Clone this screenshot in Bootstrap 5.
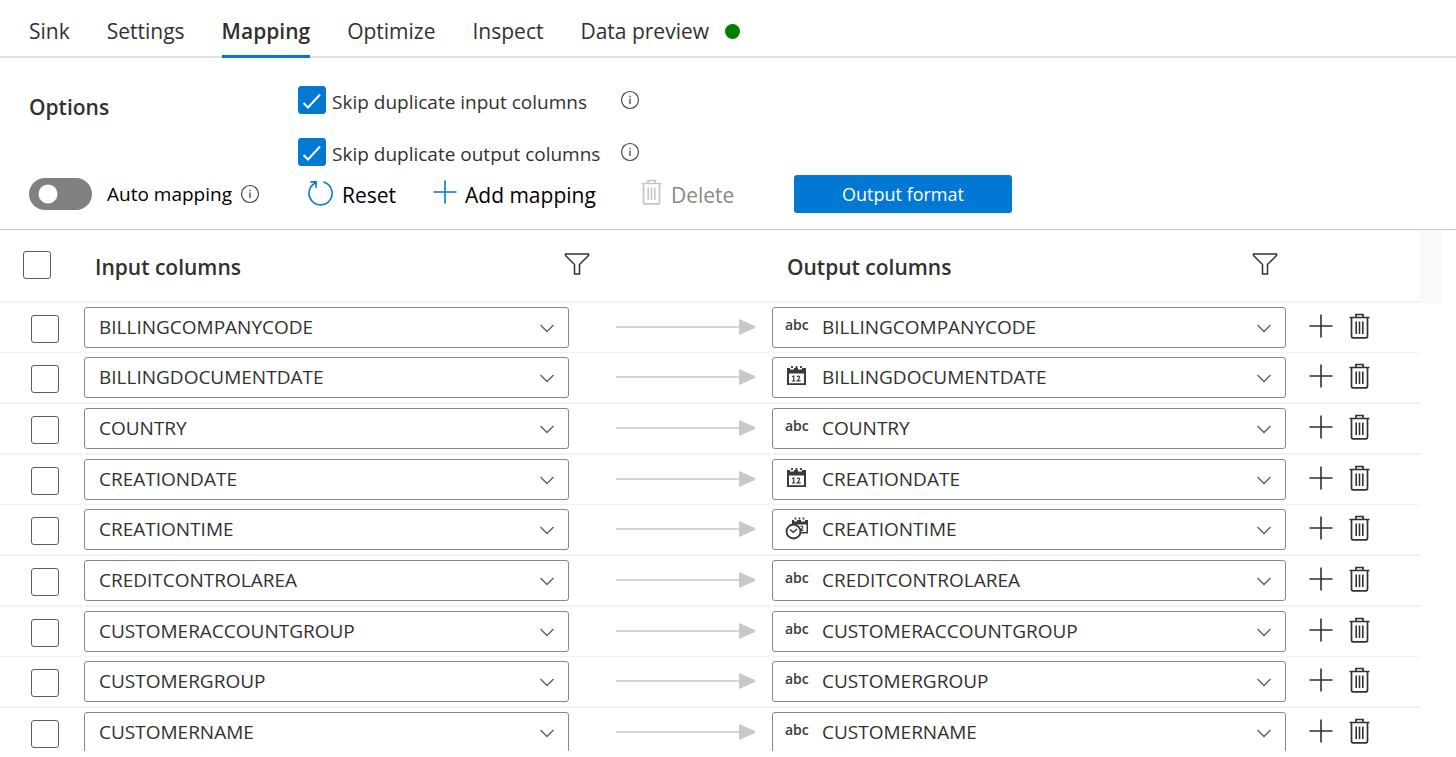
<!DOCTYPE html>
<html lang="en">
<head>
<meta charset="utf-8">
<meta name="viewport" content="width=device-width, initial-scale=1">
<title>Sink mapping</title>
<link href="https://cdn.jsdelivr.net/npm/bootstrap@5.3.0/dist/css/bootstrap.min.css" rel="stylesheet">
<style>
  body { font-family: "Open Sans", "Noto Sans", sans-serif; font-size: 19px; line-height: 26px; color: #323130; }
  .page { height: 100vh; padding-bottom: 6px; }
  svg { display: block; flex: none; fill: none; stroke: currentColor; }

  .tabs { height: 58px; gap: 37px; padding-left: 29px; border-bottom: 2px solid #e1e1e1; font-size: 21px; }
  .tabs .nav-link { padding: 17px 0 10px; line-height: 28px; height: 58px; color: #323130; border-bottom: 3px solid transparent; }
  .tabs .nav-link.active { font-weight: 600; border-bottom-color: #0078d4; }
  .status-dot { width: 15px; height: 15px; margin-left: 16px; background: #008000; }

  .options { display: grid; grid-template-columns: 269px 1fr; padding: 28px 29px 0; }
  .options h2 { font-size: 21px; line-height: 28px; font-weight: 600; margin: 7px 0 0; }
  .option-row { display: grid; grid-template-columns: 322px 1fr; height: 52px; align-items: start; }
  .option-row label { padding: 3px 0 0 6px; }
  .option-row .info { margin-top: 4px; }

  .box { flex: none; width: 28px; height: 28px; margin: 0; border: 1px solid #605e5c; }
  .box.form-check-input { border-radius: 3px; }
  .box.form-check-input:checked { background-color: #0078d4; border-color: #0078d4;
    background-size: 28px 28px;
    background-image: url("data:image/svg+xml,%3csvg xmlns='http://www.w3.org/2000/svg' viewBox='0 0 28 28'%3e%3cpath d='M5.500 17L10 21.500L22 8.500' fill='none' stroke='white' stroke-width='2'/%3e%3c/svg%3e"); }

  .tools { display: grid; grid-template-columns: 278px 126px 208px 153px 218px; padding: 0 29px 16px; height: 55px; align-items: start; margin-top: -15px; border-bottom: 1px solid #c8c8c8; color: #000; }
  .tools .btn { padding: 2px 0 0; border: 0; font-size: 21px; line-height: 28px; color: #000; height: 38px; }
  .tools .btn:disabled { color: #8a8886; opacity: 1; }
  .tools .btn:disabled svg { color: #c8c6c4; }
  .tools .btn svg { margin-bottom: 6px; }
  .tools .btn-primary { padding: 0; background: #0078d4; color: #fff; font-size: 18px; border-radius: 3px; }
  .tools label { margin-left: 15px; }
  .auto { height: 38px; }
  .toggle.form-check-input { width: 63px; height: 32px; margin: 0; border: 0; border-radius: 16px; background-color: #808080; background-size: 36px 36px; background-position: 1px center;
    background-image: url("data:image/svg+xml,%3csvg xmlns='http://www.w3.org/2000/svg' viewBox='0 0 36 36'%3e%3ccircle cx='18' cy='18' r='9.500' fill='white'/%3e%3c/svg%3e"); }
  .blue { color: #0078d4; }
  .info { color: #484644; }

  .list { min-height: 0; overflow: hidden; }
  .grid-table { flex: 1; table-layout: fixed; width: 100%; border-collapse: separate; border-spacing: 0; }
  .grid-table th, .grid-table td { padding: 0; vertical-align: top; }
  .grid-table thead th { height: 73px; border-bottom: 2px solid #f3f2f1; font-size: 21px; line-height: 28px; font-weight: 600; padding-top: 21px; }
  .grid-table tbody tr { height: 51px; }
  .grid-table tbody td { border-bottom: 2px solid #f3f2f1; padding-top: 4px; }
  .grid-table tbody tr:nth-child(3n+1) { height: 50px; }
  .grid-table tbody tr:nth-child(3n+1) td { border-bottom-width: 1px; }
  .c-check { width: 84px; }
  .c-arrow { width: 174px; }
  .c-act { width: 134px; }
  .grid-table .select-all { margin-left: 23px; }
  .grid-table tbody .box { margin-left: 31px; }
  .grid-table tbody .from { padding-right: 29px; }
  .th-name { padding: 2px 8px 0 11px; }
  .to .th-name { padding-left: 15px; }
  .gutter { width: 22px; height: 73px; margin-right: 14px; background: #faf9f8; }

  .field.form-select { height: 41px; padding: 0 40px 0 14px; border: 1px solid #8a8886; border-radius: 3px; font-size: 19px; line-height: 39px; color: #323130;
    background-size: 16px 10px; background-position: right 13px center;
    background-image: url("data:image/svg+xml,%3csvg xmlns='http://www.w3.org/2000/svg' viewBox='0 0 16 10'%3e%3cpath d='M1.500 2L8 8.500L14.500 2' fill='none' stroke='%23605e5c' stroke-width='1.300'/%3e%3c/svg%3e"); }
  .to .field.form-select { padding-left: 49px; }
  .kind { position: absolute; left: 13px; top: 8px; color: #3b3a39; pointer-events: none; }
  .abc { font-size: 14px; line-height: 20px; font-weight: 600; }
  .arrow { margin: 12px 0 0 18px; color: #c8c8c8; }
  .acts { padding: 6px 0 0 23px; gap: 16px; }
  .act { background: none; border: 0; padding: 0; color: #323130; }
</style>
</head>
<body>
<svg width="0" height="0" class="position-absolute" aria-hidden="true">
  <symbol id="i-info" viewBox="0 0 20 20"><circle cx="10" cy="10" r="8.500" stroke-width="1.200"/><path d="M10 8.500V14M10 5.800V7.200" stroke-width="1.300"/></symbol>
  <symbol id="i-reset" viewBox="0 0 28 28"><path d="M17 3.200A12 12 0 1 1 8.500 4.200M3.500 3H9.500V9" stroke-width="1.600"/></symbol>
  <symbol id="i-plus" viewBox="0 0 24 24"><path d="M12 .5V23.500M.5 12H23.500" stroke-width="1.600"/></symbol>
  <symbol id="i-trash" viewBox="0 0 22 26"><path d="M.5 4.500H20.500M7 4.500V1.500H14V4.500M2.500 4.500V23Q2.500 24.800 4 24.800H17Q18.500 24.800 18.500 23V4.500" stroke-width="1.700"/><path d="M7.200 8.500V21M10.500 8.500V21M13.800 8.500V21" stroke-width="1.600"/></symbol>
  <symbol id="i-filter" viewBox="0 0 26 22"><path d="M1.500 1H24.500V2.500L15.500 11.500V21H10.500V11.500L1.500 2.500Z" stroke-width="1.500"/></symbol>
  <symbol id="i-arrow" viewBox="0 0 139 16"><path d="M0 8H124" stroke-width="1.700"/><path d="M123 0L139 7V9L123 16Z" fill="currentColor" stroke="none"/></symbol>
  <symbol id="i-date" viewBox="0 0 22 22"><path d="M2 3H5V4.500H9V3H13V4.500H17V3H21V20H2ZM4 8.500V18.200H19V8.500Z" fill="currentColor" fill-rule="evenodd" stroke="none"/><path d="M7 1V3M11.500 1V3M16 1V3" stroke-width="1.800"/><path d="M7.200 11.800L8.700 11V16M7 16H10.300M12 11.800Q13 10.800 14.200 11.200Q15.500 12.200 12.300 15.900H15.700" stroke-width="1.200"/></symbol>
  <symbol id="i-time" viewBox="0 0 24 24"><path d="M7 3H9V4.500H12V3H16V4.500H20V3H23V16.500H15V15H21.500V7.500H13L7 7Z" fill="currentColor" stroke="none"/><path d="M10.500 .5V2.500M14.500 .5V2.500M18.500 .5V2.500" stroke-width="1.700"/><path d="M15.500 9.500Q18.500 8.500 17.500 11L15.800 13.300H18.500" stroke-width="1.200"/><circle cx="8.500" cy="14.500" r="7" fill="#fff" stroke-width="1.900"/><path d="M5 12.500L8.200 15.300L12 12" stroke-width="1.500"/></symbol>
</svg>

<div class="page d-flex flex-column">
  <nav class="nav tabs flex-nowrap flex-shrink-0">
    <a class="nav-link" href="#">Sink</a>
    <a class="nav-link" href="#">Settings</a>
    <a class="nav-link active" href="#" aria-current="page">Mapping</a>
    <a class="nav-link" href="#">Optimize</a>
    <a class="nav-link" href="#">Inspect</a>
    <a class="nav-link d-flex align-items-center" href="#">Data preview<span class="status-dot rounded-circle"></span></a>
  </nav>

  <section class="options flex-shrink-0">
    <h2>Options</h2>
    <div>
      <div class="option-row">
        <div class="d-flex"><input class="form-check-input box" type="checkbox" id="skipIn" checked><label for="skipIn">Skip duplicate input columns</label></div>
        <svg class="info" width="20" height="20"><use href="#i-info"/></svg>
      </div>
      <div class="option-row">
        <div class="d-flex"><input class="form-check-input box" type="checkbox" id="skipOut" checked><label for="skipOut">Skip duplicate output columns</label></div>
        <svg class="info" width="20" height="20"><use href="#i-info"/></svg>
      </div>
    </div>
  </section>

  <section class="tools flex-shrink-0">
    <div class="auto d-flex align-items-center form-switch p-0">
      <input class="form-check-input toggle" type="checkbox" role="switch" id="auto"><label for="auto">Auto mapping</label>
      <svg class="info ms-2" width="20" height="20"><use href="#i-info"/></svg>
    </div>
    <button class="btn d-flex align-items-center gap-2" type="button"><svg class="blue" width="27" height="27"><use href="#i-reset"/></svg>Reset</button>
    <button class="btn d-flex align-items-center gap-2" type="button"><svg class="blue" width="24" height="24"><use href="#i-plus"/></svg>Add mapping</button>
    <button class="btn d-flex align-items-center gap-2" type="button" disabled><svg width="22" height="26"><use href="#i-trash"/></svg>Delete</button>
    <button class="btn btn-primary" type="button">Output format</button>
  </section>

  <section class="list d-flex flex-grow-1 align-items-start">
    <table class="grid-table">
      <colgroup><col class="c-check"><col><col class="c-arrow"><col><col class="c-act"></colgroup>
      <thead>
        <tr>
          <th><input class="form-check-input box select-all d-block" type="checkbox" aria-label="Select all"></th>
          <th class="from"><div class="th-name d-flex justify-content-between">Input columns<svg width="26" height="22"><use href="#i-filter"/></svg></div></th>
          <th></th>
          <th class="to"><div class="th-name d-flex justify-content-between">Output columns<svg width="26" height="22"><use href="#i-filter"/></svg></div></th>
          <th></th>
        </tr>
      </thead>
      <tbody id="rows"></tbody>
    </table>
    <div class="gutter"></div>
  </section>
</div>

<script>
  const columns = [
    ["BILLINGCOMPANYCODE", "abc"], ["BILLINGDOCUMENTDATE", "date"], ["COUNTRY", "abc"],
    ["CREATIONDATE", "date"], ["CREATIONTIME", "time"], ["CREDITCONTROLAREA", "abc"],
    ["CUSTOMERACCOUNTGROUP", "abc"], ["CUSTOMERGROUP", "abc"], ["CUSTOMERNAME", "abc"]
  ];
  const kinds = {
    abc: '<span class="kind abc">abc</span>',
    date: '<svg class="kind" width="22" height="22"><use href="#i-date"/></svg>',
    time: '<svg class="kind" width="24" height="24"><use href="#i-time"/></svg>'
  };
  document.getElementById("rows").innerHTML = columns.map(([name, kind]) => `
    <tr>
      <td><input class="form-check-input box d-block mt-2" type="checkbox" aria-label="Select ${name}"></td>
      <td class="from"><select class="form-select field" aria-label="Input column"><option>${name}</option></select></td>
      <td><svg class="arrow" width="139" height="16"><use href="#i-arrow"/></svg></td>
      <td class="to"><div class="position-relative"><select class="form-select field" aria-label="Output column"><option>${name}</option></select>${kinds[kind]}</div></td>
      <td><div class="acts d-flex">
        <button class="act" type="button" aria-label="Add"><svg width="24" height="24"><use href="#i-plus"/></svg></button>
        <button class="act" type="button" aria-label="Delete"><svg width="22" height="26"><use href="#i-trash"/></svg></button>
      </div></td>
    </tr>`).join("");
</script>
<script src="https://cdn.jsdelivr.net/npm/bootstrap@5.3.0/dist/js/bootstrap.bundle.min.js"></script>
</body>
</html>
